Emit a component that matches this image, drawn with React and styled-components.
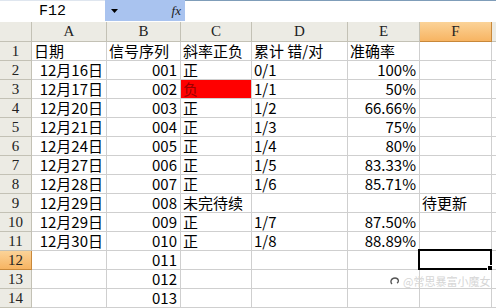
import styled, { createGlobalStyle } from 'styled-components'

const GlobalStyle = createGlobalStyle`
  body {
    margin: 0;
    background: #fff;
    font-family: "Noto Sans CJK SC", sans-serif;
    overflow: hidden;
  }
`

const TopBar = styled.div`
  display: flex;
  height: 21px;
  border-bottom: 1px solid #fff;
`

const NameBox = styled.div`
  width: 105px;
  display: flex;
  align-items: center;
  justify-content: center;
  font-family: "Liberation Mono", monospace;
  font-size: 15px;
  color: #000;
  border-top: 1px solid #dfe6ef;
`

const DropArea = styled.div`
  width: 80px;
  background: #a9c3ef;
  display: flex;
  align-items: center;
  justify-content: space-between;
  padding: 0 4px 0 6px;
  box-sizing: border-box;
`

const Fx = styled.span`
  font-family: "Liberation Serif", serif;
  font-style: italic;
  font-size: 13px;
  color: #1a1a1a;
`

const FormulaInput = styled.div`
  flex: 1;
  border-top: 1px solid #7f9db9;
`

const Sheet = styled.div`
  position: relative;
  display: grid;
  grid-template-columns: 32px 75px 74px 71px 96px 72px 72px 1fr;
  grid-template-rows: 20px;
  grid-auto-rows: 19px;
`

const Head = styled.div`
  box-sizing: border-box;
  background: ${p => (p.$active ? 'linear-gradient(#fbd398, #f7b462)' : '#ecebe4')};
  border-right: 1px solid ${p => (p.$active ? '#c8883a' : '#c3c1b5')};
  border-bottom: 1px solid ${p => (p.$active ? '#c8883a' : '#c3c1b5')};
  font-family: "Liberation Serif", serif;
  font-size: 15px;
  color: #222;
  display: flex;
  align-items: center;
  justify-content: center;
`

const Cell = styled.div`
  position: relative;
  box-sizing: border-box;
  border-right: 1px solid #cfcfcf;
  border-bottom: 1px solid #cfcfcf;
  background: ${p => p.$fill || '#fff'};
  color: ${p => (p.$fill ? '#9a0000' : '#000')};
  font-size: 15px;
  line-height: 18px;
  padding: 0 3px 0 2px;
  text-align: ${p => p.$align};
  white-space: nowrap;
  overflow: visible;
`

const Selection = styled.div`
  position: absolute;
  inset: -2px -1px -1px -2px;
  border: 2px solid #000;
  pointer-events: none;
`

const Handle = styled.div`
  position: absolute;
  right: -4px;
  bottom: -4px;
  width: 5px;
  height: 5px;
  background: #000;
  border: 1px solid #fff;
`

const Watermark = styled.div`
  position: absolute;
  left: 390px;
  top: 253px;
  display: flex;
  align-items: center;
  gap: 3px;
  font-size: 11px;
  line-height: 12px;
  color: #d6d6d6;
  white-space: nowrap;
`

const cols = ['A', 'B', 'C', 'D', 'E', 'F', '']

const rows = [
  ['日期', '信号序列', '斜率正负', '累计 错/对', '准确率', ''],
  ['12月16日', '001', '正', '0/1', '100%', ''],
  ['12月17日', '002', '负', '1/1', '50%', ''],
  ['12月20日', '003', '正', '1/2', '66.66%', ''],
  ['12月21日', '004', '正', '1/3', '75%', ''],
  ['12月24日', '005', '正', '1/4', '80%', ''],
  ['12月27日', '006', '正', '1/5', '83.33%', ''],
  ['12月28日', '007', '正', '1/6', '85.71%', ''],
  ['12月29日', '008', '未完待续', '', '', '待更新'],
  ['12月29日', '009', '正', '1/7', '87.50%', ''],
  ['12月30日', '010', '正', '1/8', '88.89%', ''],
  ['', '011', '', '', '', ''],
  ['', '012', '', '', '', ''],
  ['', '013', '', '', '', ''],
]

const aligns = ['right', 'right', 'left', 'left', 'right', 'left', 'left']

const App = () => {
  return (
    <>
      <GlobalStyle />
      <TopBar>
        <NameBox>F12</NameBox>
        <DropArea>
          <svg width="7" height="4" viewBox="0 0 7 4">
            <path d="M0 0h7L3.5 4z" fill="#000" />
          </svg>
          <Fx>fx</Fx>
        </DropArea>
        <FormulaInput />
      </TopBar>
      <Sheet>
        <Head />
        {cols.map((c, i) => (
          <Head key={i} $active={c === 'F'}>{c}</Head>
        ))}
        {rows.map((r, ri) => (
          <>
            <Head key={'h' + ri} $active={ri === 11}>{ri + 1}</Head>
            {[...r, ''].map((v, ci) => (
              <Cell
                key={ri + '-' + ci}
                $align={ri === 0 ? 'left' : aligns[ci]}
                $fill={ri === 2 && ci === 2 ? '#ff0000' : null}
              >
                {v}
                {ri === 11 && ci === 5 && (
                  <Selection>
                    <Handle />
                  </Selection>
                )}
              </Cell>
            ))}
          </>
        ))}
        <Watermark>
          <svg width="10" height="10" viewBox="0 0 10 10">
            <path d="M2 8c-2-2-1-6 3-6s4 4 2 5" fill="none" stroke="#555" strokeWidth="1.4" />
          </svg>
          <span>@常思暴富小魔女</span>
        </Watermark>
      </Sheet>
    </>
  )
}

export default App
